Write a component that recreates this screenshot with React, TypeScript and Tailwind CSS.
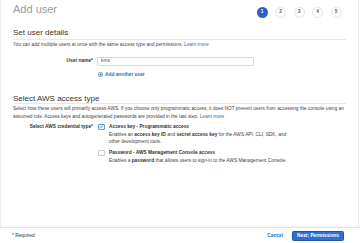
const steps = [1, 2, 3, 4, 5]

function Check({ checked }: { checked?: boolean }) {
  return (
    <span
      className={
        'flex h-[6.5px] w-[6.5px] shrink-0 items-center justify-center rounded-[1px] border ' +
        (checked ? 'border-[#6b9ad8] bg-[#eef4fc]' : 'border-[#c6cccf] bg-white')
      }
    >
      {checked && (
        <svg width="5" height="5" viewBox="0 0 10 10" fill="none">
          <path d="M2 5.2 4.2 7.4 8.2 2.6" stroke="#1f64c8" strokeWidth="1.6" />
        </svg>
      )}
    </span>
  )
}

export default function App() {
  return (
    <div className="flex h-[243px] w-[360px] flex-col overflow-hidden bg-white font-['Liberation_Sans',Arial,sans-serif] text-[4.8px] text-[#444]">
      <div className="mr-[1px] flex flex-1 flex-col border-x border-[#eeeeee] px-[12px]">
        <div className="flex h-[25px] items-start justify-between">
          <h1 className="mt-[4px] text-[11px] leading-[11px] text-[#9a9a9a]">Add user</h1>
          <ol className="mr-[4.5px] mt-[6.5px] flex gap-[7.5px]">
            {steps.map((n) => (
              <li
                key={n}
                className={
                  'flex h-[11px] w-[11px] items-center justify-center rounded-full text-[4.8px] font-bold ' +
                  (n === 1
                    ? 'bg-[#2a62c0] text-white'
                    : 'border border-[#e2e4e6] bg-white text-[#555]')
                }
              >
                {n}
              </li>
            ))}
          </ol>
        </div>

        <h2 className="mt-[4px] border-b border-[#e6e8ea] pb-[2px] text-[8px] leading-[8px] text-[#333]">
          Set user details
        </h2>
        <p className="mt-[1px] leading-[7px]">
          You can add multiple users at once with the same access type and permissions.{' '}
          <span className="text-[#1f6fc0]">Learn more</span>
        </p>

        <div className="mt-[8.5px] flex items-center">
          <span className="w-[80px] text-right font-bold text-[#333]">User name*</span>
          <div className="ml-[4px] flex h-[9px] w-[157px] items-center rounded-[1px] border border-[#d5dbdb] px-[3px] text-[#555]">
            kms
          </div>
        </div>
        <div className="ml-[84.5px] mt-[5.5px] flex h-[7px] items-center gap-[2.5px] font-bold text-[#1f6fc0]">
          <svg width="5" height="5" viewBox="0 0 10 10" fill="none" stroke="#1f6fc0" strokeWidth="1.4">
            <circle cx="5" cy="5" r="4.2" />
            <path d="M5 2.8v4.4M2.8 5h4.4" />
          </svg>
          Add another user
        </div>

        <h2 className="mt-[17px] border-b border-[#e6e8ea] text-[8px] leading-[8px] text-[#333]">
          Select AWS access type
        </h2>
        <p className="mt-[0.5px] leading-[8px]">
          Select how these users will primarily access AWS. If you choose only programmatic access, it does NOT
          prevent users from accessing the console using an assumed role. Access keys and autogenerated passwords
          are provided in the last step. <span className="text-[#1f6fc0]">Learn more</span>
        </p>

        <div className="mt-[2.5px] flex leading-[7.5px]">
          <span className="w-[80px] shrink-0 text-right font-bold text-[#333]">Select AWS credential type*</span>
          <div className="ml-[5px] flex flex-col gap-[3.5px]">
            <div className="flex gap-[4.5px]">
              <div className="pt-[0.5px]">
                <Check checked />
              </div>
              <div className="w-[185px]">
                <div className="font-bold text-[#333]">Access key - Programmatic access</div>
                <div>
                  Enables an <b className="text-[#333]">access key ID</b> and{' '}
                  <b className="text-[#333]">secret access key</b> for the AWS API, CLI, SDK, and other development
                  tools.
                </div>
              </div>
            </div>
            <div className="flex gap-[4.5px]">
              <div className="pt-[0.5px]">
                <Check />
              </div>
              <div className="w-[200px]">
                <div className="font-bold text-[#333]">Password - AWS Management Console access</div>
                <div>
                  Enables a <b className="text-[#333]">password</b> that allows users to sign-in to the AWS Management
                  Console.
                </div>
              </div>
            </div>
          </div>
        </div>
      </div>

      <div className="flex h-[16px] shrink-0 items-center border-t border-[#e3e3e3] pl-[12px] pr-[16px] shadow-[0_-1px_2px_rgba(0,0,0,0.05)]">
        <span className="text-[#333]">* Required</span>
        <span className="ml-auto font-bold text-[#1f6fc0]">Cancel</span>
        <button className="ml-[9px] flex h-[10px] w-[52px] items-center justify-center rounded-[1.5px] border border-[#1d56a8] bg-[#2f6fd0] font-bold text-white">
          Next: Permissions
        </button>
      </div>
    </div>
  )
}
